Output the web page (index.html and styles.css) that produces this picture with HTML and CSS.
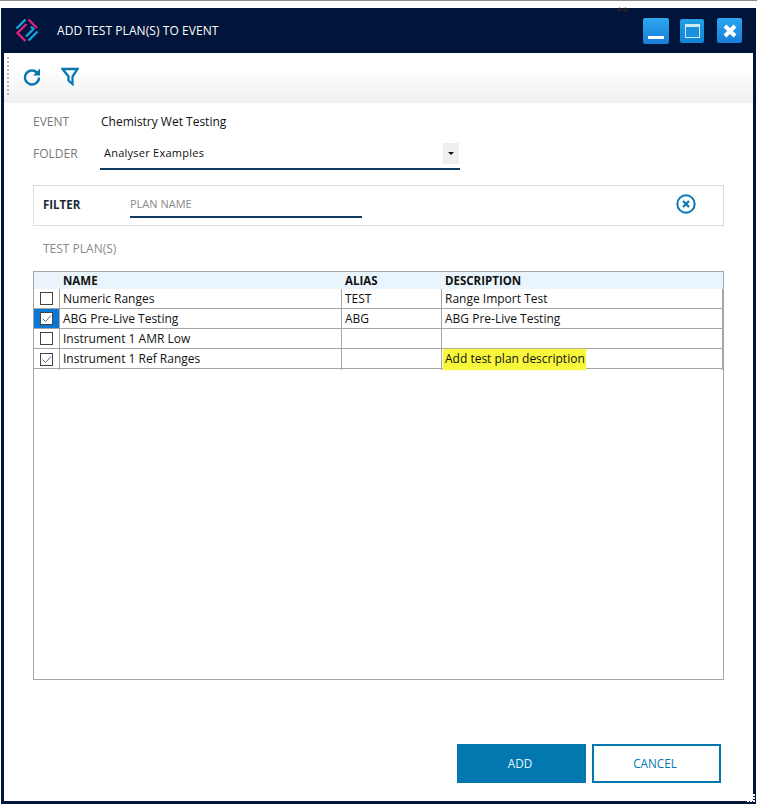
FILE: index.html
```html
<!DOCTYPE html>
<html lang="en">
<head>
<meta charset="utf-8">
<title>Add test plan(s) to event</title>
<link rel="stylesheet" href="styles.css">
</head>
<body>
<svg class="cursor" width="11" height="6" viewBox="0 0 11 6" fill="#222"><path d="M0 3L3 0V2H8V0L11 3L8 6V4H3V6Z"/></svg>
<div class="window">
  <header class="titlebar">
    <svg class="logo" width="24" height="24" viewBox="0 0 24 24" fill="none" stroke-width="2.4">
      <path d="M11.5 6L2.5 15L10.5 23" stroke="#e0207e"/>
      <path d="M13.5 1.5L22 10" stroke="#e0207e"/>
      <path d="M1.5 10.5L10.5 1.5" stroke="#14a3dc"/>
      <path d="M13.5 22.5L22.5 13.5" stroke="#14a3dc"/>
      <path d="M11 18.5L18.5 11L16 8.5" stroke="#14a3dc"/>
    </svg>
    <h1 class="title">ADD TEST PLAN(S) TO EVENT</h1>
    <div class="controls">
      <button class="ctl ctl-min" aria-label="Minimize"><span class="min-bar"></span></button>
      <button class="ctl ctl-max" aria-label="Maximize"><span class="max-box"></span></button>
      <button class="ctl ctl-close" aria-label="Close">
        <svg width="16" height="16" viewBox="0 0 16 16"><path d="M3 3L13 13M13 3L3 13" stroke="#fff" stroke-width="4"/></svg>
      </button>
    </div>
  </header>
  <div class="toolbar">
    <span class="grip"></span>
    <svg class="tool refresh" width="18" height="18" viewBox="0 0 18 18" fill="none" stroke="#0a78b0" stroke-width="2.4">
      <path d="M14 4.6A7 7 0 1 0 16 9.5"/>
      <path d="M17 0.5V7.5H10Z" fill="#0a78b0" stroke="none"/>
    </svg>
    <svg class="tool funnel" width="18" height="19" viewBox="0 0 18 19" fill="none" stroke="#0a78b0" stroke-width="2.3">
      <path d="M1.5 2H16.5L11.5 9.5V17L7.5 13.5V9.5Z" stroke-linejoin="miter"/>
    </svg>
  </div>
  <main class="content">
    <div class="field-row event-row">
      <span class="label">EVENT</span>
      <span class="value">Chemistry Wet Testing</span>
    </div>
    <div class="field-row folder-row">
      <span class="label">FOLDER</span>
      <div class="select">
        <span class="select-text">Analyser Examples</span>
        <span class="select-btn"><span class="caret"></span></span>
      </div>
    </div>
    <section class="filter">
      <span class="filter-label">FILTER</span>
      <div class="filter-input">PLAN NAME</div>
      <svg class="clear" width="20" height="20" viewBox="0 0 20 20" fill="none" stroke="#0a78b0">
        <circle cx="10" cy="10" r="8.7" stroke-width="2"/>
        <path d="M7 7L13 13M13 7L7 13" stroke-width="2.2"/>
      </svg>
    </section>
    <div class="section-label">TEST PLAN(S)</div>
    <div class="grid">
      <div class="row head">
        <div class="cell check"></div>
        <div class="cell">NAME</div>
        <div class="cell">ALIAS</div>
        <div class="cell">DESCRIPTION</div>
      </div>
      <div class="row">
        <div class="cell check"><span class="box"></span></div>
        <div class="cell">Numeric Ranges</div>
        <div class="cell">TEST</div>
        <div class="cell">Range Import Test</div>
      </div>
      <div class="row">
        <div class="cell check selected"><span class="box">
          <svg width="13" height="13" viewBox="0 0 13 13" fill="none" stroke="#666" stroke-width="1"><path d="M2.5 6.5L5.5 9.5L11 3.5"/></svg>
        </span></div>
        <div class="cell">ABG Pre-Live Testing</div>
        <div class="cell">ABG</div>
        <div class="cell">ABG Pre-Live Testing</div>
      </div>
      <div class="row">
        <div class="cell check"><span class="box"></span></div>
        <div class="cell">Instrument 1 AMR Low</div>
        <div class="cell"></div>
        <div class="cell"></div>
      </div>
      <div class="row">
        <div class="cell check"><span class="box">
          <svg width="13" height="13" viewBox="0 0 13 13" fill="none" stroke="#666" stroke-width="1"><path d="M2.5 6.5L5.5 9.5L11 3.5"/></svg>
        </span></div>
        <div class="cell">Instrument 1 Ref Ranges</div>
        <div class="cell"></div>
        <div class="cell hint-cell"><mark class="hint">Add test plan description</mark></div>
      </div>
    </div>
    <div class="actions">
      <button class="btn btn-primary">ADD</button>
      <button class="btn btn-outline">CANCEL</button>
    </div>
  </main>
</div>
<svg class="resize" width="9" height="9" viewBox="0 0 9 9" fill="#fff"><path d="M6 0h2v2H6zM3 3h2v2H3zM6 3h2v2H6zM0 6h2v2H0zM3 6h2v2H3zM6 6h2v2H6z"/></svg>
</body>
</html>
```
FILE: styles.css
```css
* { box-sizing: border-box; }
html, body { margin: 0; padding: 0; background: #fff; }
body {
  position: relative;
  height: 805px;
  overflow: hidden;
  border-top: 1px solid #8a8a8a;
  font-family: "Open Sans", "Noto Sans", sans-serif;
  font-size: 12px;
  color: #111;
}
.cursor { position: absolute; left: 617px; top: 6px; }
.resize { position: absolute; left: 747px; top: 793px; }
.window {
  margin: 7px 1px 0 1px;
  height: 796px;
  border: 3px solid #01153a;
  border-top: 0;
  display: flex;
  flex-direction: column;
  background: #fff;
}
.titlebar {
  height: 45px;
  flex: none;
  background: #01153a;
  display: flex;
  align-items: center;
  padding: 0 11px 0 11px;
}
.logo { flex: none; margin-bottom: 2px; }
.title {
  margin: 0 0 0 18px;
  font-size: 12px;
  font-weight: 400;
  letter-spacing: 0.07px;
  color: #fff;
  white-space: nowrap;
}
.controls {
  margin-left: auto;
  display: flex;
  align-items: center;
}
.ctl {
  padding: 0;
  border: 0;
  border-radius: 2px;
  background: linear-gradient(#2aa8ef, #1a7cd9);
  display: flex;
  align-items: center;
  justify-content: center;
}
.ctl-min { width: 26px; height: 26px; }
.min-bar { width: 16px; height: 3px; background: #fff; margin-top: 14px; }
.ctl-max { width: 24px; height: 24px; margin-left: 11px; background: linear-gradient(#1f9fe6, #0f85d5); }
.max-box { width: 15px; height: 14px; border: 1px solid #cfe8f8; border-top-width: 3px; background: #1b90dd; }
.ctl-close { width: 25px; height: 25px; margin-left: 13px; }
.toolbar {
  height: 50px;
  flex: none;
  background: linear-gradient(#fff 30%, #f0f0f0);
  display: flex;
  align-items: center;
  padding-left: 3px;
}
.grip {
  width: 2px;
  height: 38px;
  margin-bottom: 4px;
  background-image: linear-gradient(#b5b5b5 50%, transparent 50%);
  background-size: 2px 4px;
}
.tool { flex: none; }
.refresh { margin-left: 14px; margin-bottom: 3px; }
.funnel { margin-left: 20px; margin-bottom: 3px; }
.content {
  flex: 1;
  display: flex;
  flex-direction: column;
  padding: 0 29px 0 29px;
  min-height: 0;
}
.field-row { display: flex; align-items: center; }
.label { width: 67px; flex: none; color: #7a7a7a; }
.event-row { height: 18px; margin-top: 9px; }
.value { font-size: 12px; color: #111; padding-left: 1px; }
.folder-row { height: 34px; margin-top: 6px; }
.select {
  width: 360px;
  height: 34px;
  border-bottom: 2px solid #0d3a5e;
  display: flex;
  align-items: center;
  justify-content: space-between;
  padding: 2px 1px 0 4px;
  font-size: 11px;
  letter-spacing: 0.25px;
}
.select-text { margin-top: -2px; }
.select-btn {
  width: 16px;
  height: 21px;
  background: #efefef;
  display: flex;
  align-items: center;
  justify-content: center;
}
.caret {
  width: 0;
  height: 0;
  border: 3px solid transparent;
  border-top: 3px solid #111;
  border-bottom: 0;
}
.filter {
  height: 41px;
  margin-top: 15px;
  border: 1px solid #dcdcdc;
  display: flex;
  align-items: center;
  padding: 0 27px 0 9px;
}
.filter-label { width: 87px; flex: none; font-weight: 700; color: #1c2b3a; font-size: 11.5px; margin-bottom: 2px; }
.filter-input {
  align-self: flex-start;
  width: 232px;
  height: 32px;
  border-bottom: 2px solid #0d3a5e;
  color: #8a8a8a;
  font-size: 11px;
  padding-top: 10px;
}
.clear { margin-left: auto; margin-bottom: 3px; }
.section-label {
  margin-top: 14px;
  padding-left: 10px;
  height: 17px;
  color: #8a8a8a;
  font-size: 12px;
}
.grid {
  margin-top: 14px;
  height: 409px;
  flex: none;
  border: 1px solid #a6a6a6;
}
.row {
  display: grid;
  grid-template-columns: 26px 282px 100px 281px;
  height: 20px;
  border-bottom: 1px solid #a6a6a6;
}
.cell {
  border-right: 1px solid #a6a6a6;
  padding: 1px 0 0 3px;
  line-height: 18px;
  white-space: nowrap;
  overflow: hidden;
}
.row.head {
  height: 17px;
  border-bottom: 0;
  background: #eaf4fc;
}
.head .cell { border: 0; font-weight: 700; font-size: 11.5px; line-height: 17px; padding-top: 0; color: #111; }
.check {
  padding: 0;
  display: flex;
  align-items: center;
  justify-content: center;
}
.check.selected { background: #0a78d2; }
.box {
  width: 13px;
  height: 13px;
  border: 1px solid #444;
  background: #fff;
  display: block;
  position: relative;
}
.box svg { position: absolute; left: -1px; top: -1px; }
.cell.hint-cell { overflow: visible; padding-top: 0; }
.hint {
  display: inline-block;
  background: #f7f73c;
  color: #111;
  margin-left: -2px;
  padding: 1px 1px 0 2px;
  height: 21px;
  line-height: 18px;
  box-shadow: 0 0 1px #f7f73c;
}
.actions {
  display: flex;
  justify-content: flex-end;
  gap: 6px;
  margin-top: 64px;
  padding-right: 3px;
}
.btn {
  width: 129px;
  height: 39px;
  font-family: inherit;
  font-size: 11.7px;
  border: 2px solid #0277b0;
  background: #0277b0;
  color: #e8f4fb;
  padding: 0 3px 2px 0;
}
.btn-outline { background: #fff; color: #0277b0; }
```
